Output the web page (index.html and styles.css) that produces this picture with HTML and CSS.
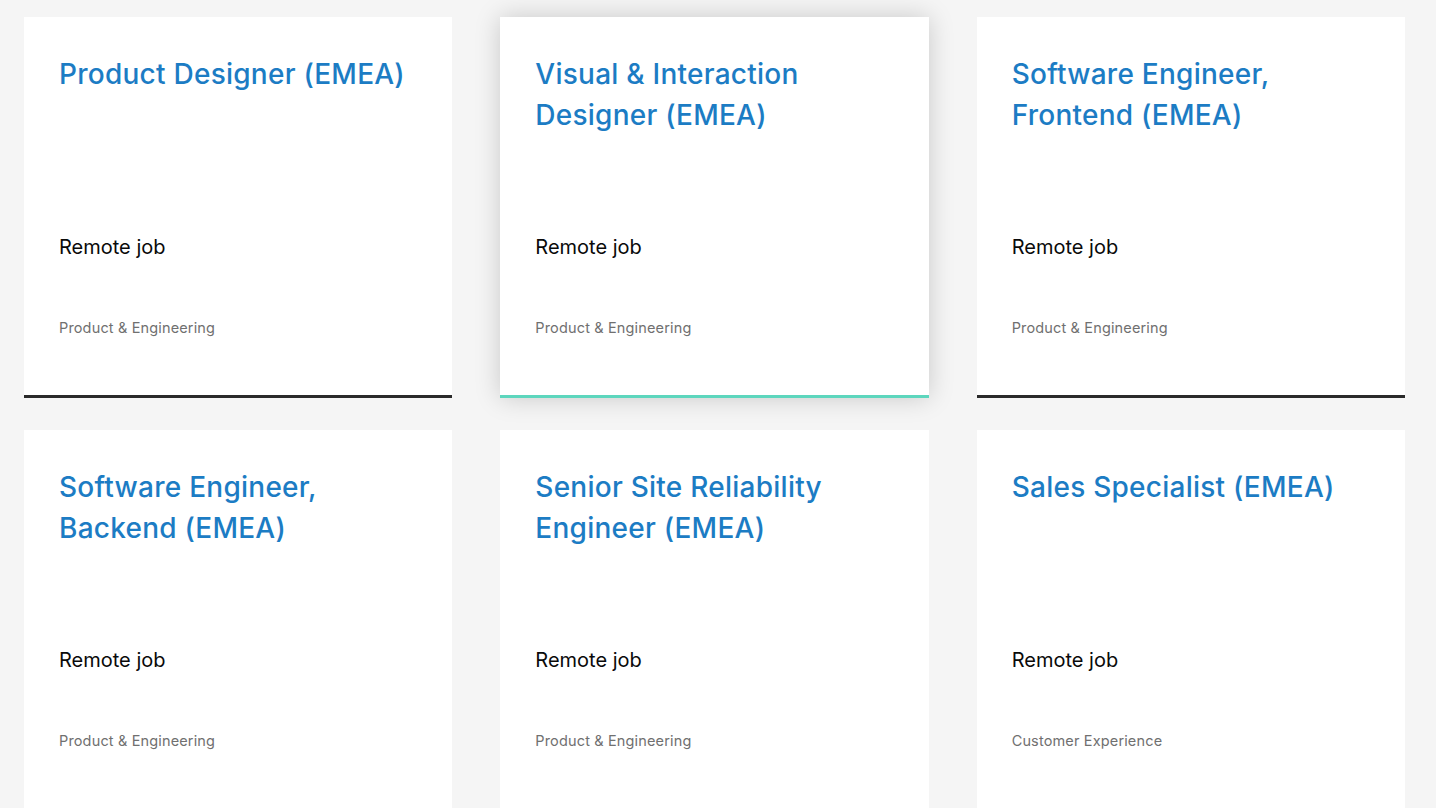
FILE: index.html
```html
<!DOCTYPE html>
<html lang="en">
<head>
<meta charset="utf-8">
<title>Jobs</title>
<link rel="stylesheet" href="styles.css">
</head>
<body>
<main class="jobs">
  <a class="job" href="#">
    <h3 class="job-title">Product Designer (EMEA)</h3>
    <p class="job-type">Remote job</p>
    <p class="job-dept">Product &amp; Engineering</p>
  </a>
  <a class="job job-active" href="#">
    <h3 class="job-title">Visual &amp; Interaction Designer (EMEA)</h3>
    <p class="job-type">Remote job</p>
    <p class="job-dept">Product &amp; Engineering</p>
  </a>
  <a class="job" href="#">
    <h3 class="job-title">Software Engineer, Frontend (EMEA)</h3>
    <p class="job-type">Remote job</p>
    <p class="job-dept">Product &amp; Engineering</p>
  </a>
  <a class="job" href="#">
    <h3 class="job-title">Software Engineer, Backend (EMEA)</h3>
    <p class="job-type">Remote job</p>
    <p class="job-dept">Product &amp; Engineering</p>
  </a>
  <a class="job" href="#">
    <h3 class="job-title">Senior Site Reliability Engineer (EMEA)</h3>
    <p class="job-type">Remote job</p>
    <p class="job-dept">Product &amp; Engineering</p>
  </a>
  <a class="job" href="#">
    <h3 class="job-title">Sales Specialist (EMEA)</h3>
    <p class="job-type">Remote job</p>
    <p class="job-dept">Customer Experience</p>
  </a>
</main>
</body>
</html>
```
FILE: styles.css
```css
html, body {
  margin: 0;
  padding: 0;
  background: #f5f5f5;
  font-family: Inter, "Noto Sans", sans-serif;
}

.jobs {
  display: grid;
  grid-template-columns: repeat(3, 1fr);
  column-gap: 48px;
  row-gap: 32px;
  padding: 17px 31px 40px 24px;
}

.job {
  display: flex;
  flex-direction: column;
  height: 381px;
  box-sizing: border-box;
  background: #fff;
  border-bottom: 3px solid #2a2a2a;
  padding: 37px 35px 0 35px;
  text-decoration: none;
}

.job-active {
  border-bottom-color: #5dd6bd;
  box-shadow: 0 0 24px rgba(0, 0, 0, 0.18);
}

.job-title {
  margin: 0;
  height: 181px;
  font-size: 28px;
  line-height: 41px;
  font-weight: 500;
  color: #1c7cc4;
  letter-spacing: 0.25px;
}

.job-type {
  margin: 0;
  font-size: 20px;
  line-height: 24px;
  color: #0a0a0a;
}

.job-dept {
  margin: 59px 0 0 0;
  font-size: 14.5px;
  line-height: 20px;
  letter-spacing: 0.15px;
  color: #707070;
}
```
